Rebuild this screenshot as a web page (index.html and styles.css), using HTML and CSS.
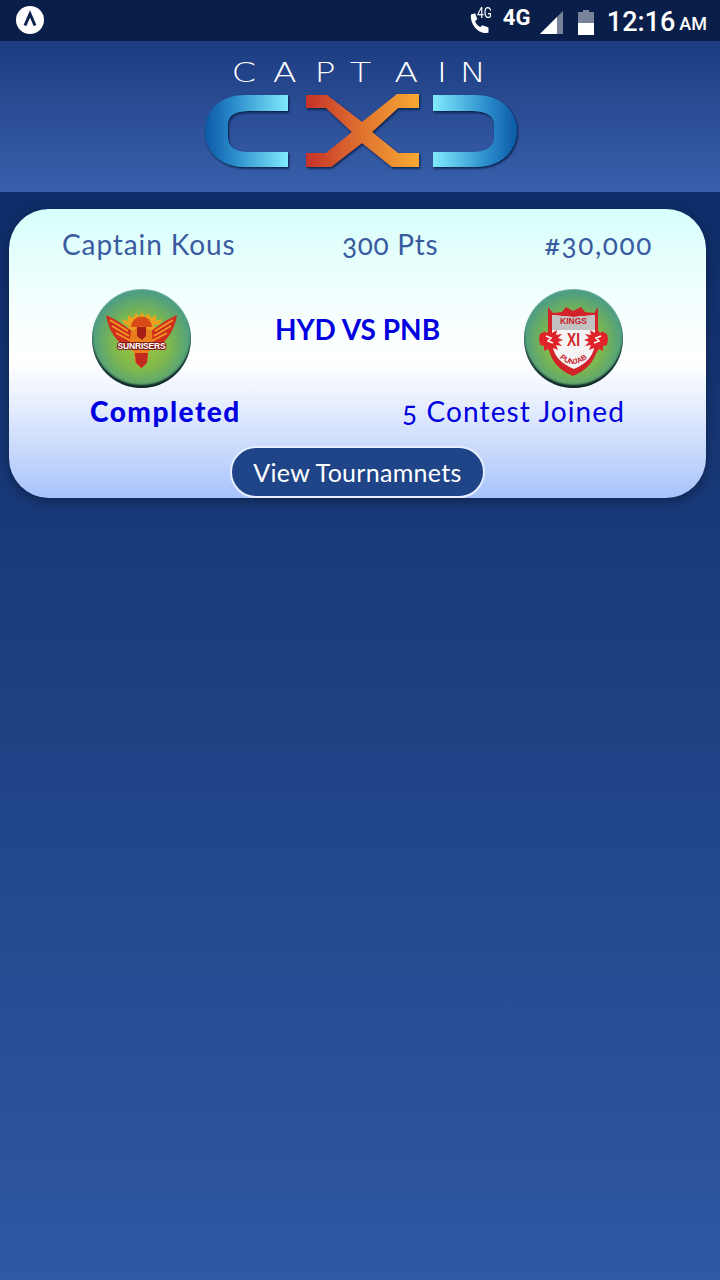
FILE: index.html
```html
<!DOCTYPE html>
<html lang="en">
<head>
<meta charset="utf-8">
<title>Captain XI</title>
<link rel="stylesheet" href="styles.css">
</head>
<body>
<div class="app">
  <div class="status">
    <div class="app-dot">
      <svg width="28" height="28" viewBox="0 0 28 28"><circle cx="14" cy="14" r="14" fill="#fff"/><path d="M9 19.5 14 8l5 11.5" fill="none" stroke="#0b2250" stroke-width="3"/></svg>
    </div>
    <div class="status-right">
      <div class="call">
        <svg width="22" height="26" viewBox="0 0 22 26"><path d="M1 5 5.500 3.500 8 10l-2.500 2c1 3 3 5.500 5.500 6.500l2.500-2 6.500 2.500v5.500l-3.500.5C8 25 0 15 1 5Z" fill="#fff"/></svg>
        <span class="call-4g">4G</span>
      </div>
      <span class="net">4G</span>
      <svg class="signal" width="24" height="24" viewBox="0 0 24 24"><path d="M0 23 23 0v23Z" fill="#76839b"/><path d="M0 23 17 6v17Z" fill="#fff"/></svg>
      <svg class="battery" width="16" height="25" viewBox="0 0 16 25"><path d="M5 0h6v2h5v23H0V2h5Z" fill="#76839b"/><rect y="13" width="16" height="12" fill="#fff"/></svg>
      <span class="time">12:16</span><span class="ampm">AM</span>
    </div>
  </div>

  <header class="head">
    <svg class="logo" width="340" height="125" viewBox="190 55 340 125">
      <defs>
        <linearGradient id="gl" x1="0" x2="1" y1="0" y2="0"><stop offset="0" stop-color="#0b5aa6"/><stop offset=".35" stop-color="#2b8ccb"/><stop offset="1" stop-color="#80eafc"/></linearGradient>
        <linearGradient id="gr" x1="1" x2="0" y1="0" y2="0"><stop offset="0" stop-color="#0b5aa6"/><stop offset=".35" stop-color="#2b8ccb"/><stop offset="1" stop-color="#80eafc"/></linearGradient>
        <linearGradient id="gx" x1="0" x2="1" y1="0" y2="0"><stop offset="0" stop-color="#c5322a"/><stop offset=".5" stop-color="#e0732f"/><stop offset="1" stop-color="#f8a931"/></linearGradient>
        <filter id="ds" x="-5%" y="-5%" width="110%" height="115%"><feDropShadow dx="1" dy="1.5" stdDeviation=".8" flood-color="#06163a" flood-opacity=".9"/></filter>
      </defs>
      <text class="logo-text" transform="scale(1.35 1)" y="82" x="171.500 202 233 259 292 323.500 340.500">CAPTAIN</text>
      <g filter="url(#ds)">
        <path d="M288 95H245C219 95 205 112 205 131s14 36 40 36h43v-15h-40c-13 0-20-6-20-14v-14c0-8 7-13 20-13h40Z" fill="url(#gl)"/>
        <path d="M433 95h43c26 0 41 17 41 36s-15 36-41 36h-43v-15h40c13 0 21-6 21-14v-14c0-8-8-13-21-13h-40Z" fill="url(#gr)"/>
        <path d="M306 95h21l35 27 35-28h22v14h-21l-26 24 26 21h21v14h-27l-30-24-31 24h-25v-14h20l26-21-26-24h-20Z" fill="url(#gx)"/>
      </g>
    </svg>
  </header>

  <main class="main">
    <section class="card">
      <div class="row-top">
        <span class="name">Captain Kous</span>
        <span class="pts">300 Pts</span>
        <span class="rank">#30,000</span>
      </div>
      <div class="row-teams">
        <div class="badge">
          <svg width="99" height="99" viewBox="0 0 99 99">
            <path d="M35 41a15 15 0 0 1 29 0Z" fill="#f0a020"/>
            <path d="M33 36l-3-6 6 2 0-6 5 3 3-5 3 4 3-5 3 5 3-4 3 5 5-3 0 6 6-2-3 6Z" fill="#eba21f"/>
            <path d="M39 38a10 10 0 0 1 21 0Z" fill="#d84a18"/>
            <path d="M14 26C24 30 34 38 43 44L45 60 33 58C22 50 16 39 14 26Z" fill="#cf2f1c"/>
            <path d="M85 26C75 30 65 38 56 44L54 60 66 58C77 50 83 39 85 26Z" fill="#cf2f1c"/>
            <path d="M18 31l18 11M20 37l17 10M24 44l15 8M81 31 63 42M79 37 62 47M75 44l-15 8" stroke="#f39a22" stroke-width="1.600"/>
            <path d="M39 42 49 37l11 5 1 16-5 5-1 10-6 6-6-6-1-10-5-5Z" fill="#ea7d1c"/>
            <path d="M45 38h9v9l-4 4-5-4Z" fill="#a71e17"/>
            <path d="M43 64h13l-1 10-5.500 5-5.500-5Z" fill="#c22a20"/>
            <text class="sun-text" x="49.500" y="60">SUNRISERS</text>
          </svg>
        </div>
        <div class="match">HYD VS PNB</div>
        <div class="badge">
          <svg width="99" height="99" viewBox="0 0 99 99">
            <path d="M24 18l5 6 9-1 4-5 7 4 8-4 4 5 9 1 4-6v33c0 20-11 30-25 36C35 81 24 71 24 51Z" fill="#d2232a"/>
            <path d="M28 26l10 1 12 1 11-1 10-1v25c0 16-9 24-21 29-12-5-22-13-22-29Z" fill="#f4f4f4"/>
            <path d="M28 26l10 1 12 1 11-1 10-1v15H28Z" fill="#c2c2c2"/>
            <path class="lion" d="M19 42l4 2 3-4 2 4 5-3-1 5 6-1-4 4 5 2-5 2 4 4-6-1 2 5-5-2-2 5-3-4-4 2 0-5-4-1-1-6 1-5 4-2Z"/>
            <path class="lion" d="M80 42l-4 2-3-4-2 4-5-3 1 5-6-1 4 4-5 2 5 2-4 4 6-1-2 5 5-2 2 5 3-4 4 2 0-5 4-1 1-6-1-5-4-2Z"/>
            <path d="M22 47l5 2-3 3 5 2M77 47l-5 2 3 3-5 2" fill="none" stroke="#fff" stroke-width="1.500"/>
            <text class="kx-kings" x="49.500" y="35">KINGS</text>
            <text class="kx-xi" x="49.500" y="57" textLength="13" lengthAdjust="spacingAndGlyphs">XI</text>
            <path id="pj" d="M31 64Q49 86 68 64" fill="none"/>
            <text class="kx-punjab"><textPath href="#pj" startOffset="50%">PUNJAB</textPath></text>
          </svg>
        </div>
      </div>
      <div class="row-state">
        <span class="state">Completed</span>
        <span class="joined">5 Contest Joined</span>
      </div>
      <button class="view">View Tournamnets</button>
    </section>
  </main>
</div>
</body>
</html>
```
FILE: styles.css
```css
* { box-sizing: border-box; }
html, body { margin: 0; padding: 0; }
body { width: 720px; height: 1280px; overflow: hidden; font-family: "Lato", "Open Sans", sans-serif; }
.app { width: 720px; height: 1280px; display: flex; flex-direction: column; }

.status { height: 41px; flex: none; background: #0a1e4a; display: flex; align-items: center; justify-content: space-between; padding: 0 13px 0 16px; color: #fff; font-family: "Roboto", sans-serif; }
.app-dot { display: flex; margin-top: -1px; }
.status-right { display: flex; align-items: center; }
.call { display: flex; align-items: flex-start; width: 26px; height: 28px; margin-top: 4px; }
.call-4g { font-size: 15px; line-height: 15px; margin: -3px 0 0 -13px; transform: scaleX(.8); transform-origin: left top; }
.net { font-size: 22px; font-weight: 700; margin: -6px 0 0 7px; width: 32px; }
.signal { margin: 4px 0 0 5px; }
.battery { margin: 4px 0 0 14px; }
.time { font-size: 27px; font-weight: 500; margin: 2px 0 0 13px; line-height: 30px; }
.ampm { font-size: 18px; font-weight: 500; margin: 7px 0 0 4px; line-height: 24px; }

.head { height: 151px; flex: none; background: linear-gradient(#1c3c80, #3a60ac); display: flex; justify-content: center; padding-top: 14px; }
.logo { display: block; }
.logo-text { font-family: "DejaVu Sans", sans-serif; font-weight: 200; font-size: 26px; fill: #fff; }

.main { flex: 1; background: linear-gradient(#0e2c67, #3058a3 100%); padding: 17px 14px 0 9px; }
.card { height: 289px; border-radius: 40px; background: linear-gradient(#d6fffb 0%, #f2fffe 30%, #fff 53%, #e2ebfd 70%, #a8c3fb 100%); box-shadow: 0 4px 12px rgba(0, 0, 0, .35); padding-top: 17px; display: flex; flex-direction: column; }

.row-top { display: flex; justify-content: space-between; padding: 0 53px; height: 36px; line-height: 36px; font-size: 28px; color: #3a5ba0; font-variant-numeric: oldstyle-nums; white-space: nowrap; }
.name { letter-spacing: .9px; }
.pts { letter-spacing: .7px; }
.rank { letter-spacing: 1.6px; }
.row-teams { display: flex; justify-content: space-between; padding: 0 83px; margin-top: 27px; height: 99px; }
.badge { width: 99px; height: 99px; border-radius: 50%; background: radial-gradient(circle at 50% 54%, #a5c83a 0%, #7fb84c 38%, #4f9f80 68%, #358c94 88%, #2c7d88 100%); box-shadow: inset 0 -3px 2px rgba(0, 15, 25, .85), inset 0 1px 1px rgba(255, 255, 255, .25); }
.badge svg { display: block; }
.match { font-size: 28px; font-weight: 700; color: #0000e0; line-height: 36px; margin-top: 22px; white-space: nowrap; }
.row-state { display: flex; justify-content: space-between; padding: 0 81px; margin-top: 5px; height: 36px; line-height: 36px; color: #0000e0; font-size: 28px; font-variant-numeric: oldstyle-nums; white-space: nowrap; }
.state { font-weight: 900; letter-spacing: 1.5px; }
.joined { letter-spacing: 1.1px; }
.view { display: block; width: 255px; height: 52px; margin: 17px auto 0; border: 2px solid #e6eeff; border-radius: 26px; background: #1f4488; color: #fff; font-family: inherit; font-size: 25px; letter-spacing: .3px; padding: 0; }

.lion { fill: #df2329; }
.sun-text { font-family: "Liberation Sans", sans-serif; font-weight: 700; font-size: 8.5px; fill: #fff; stroke: #7f1915; stroke-width: 2px; paint-order: stroke; text-anchor: middle; letter-spacing: -.2px; }
.kx-kings { font-family: "Liberation Sans", sans-serif; font-weight: 700; font-size: 8.5px; fill: #c8202a; text-anchor: middle; }
.kx-punjab { font-family: "Liberation Sans", sans-serif; font-weight: 700; font-size: 7.5px; fill: #c8202a; text-anchor: middle; }
.kx-xi { font-family: "Liberation Sans", sans-serif; font-weight: 700; font-size: 19px; fill: #d2232a; text-anchor: middle; }
```
